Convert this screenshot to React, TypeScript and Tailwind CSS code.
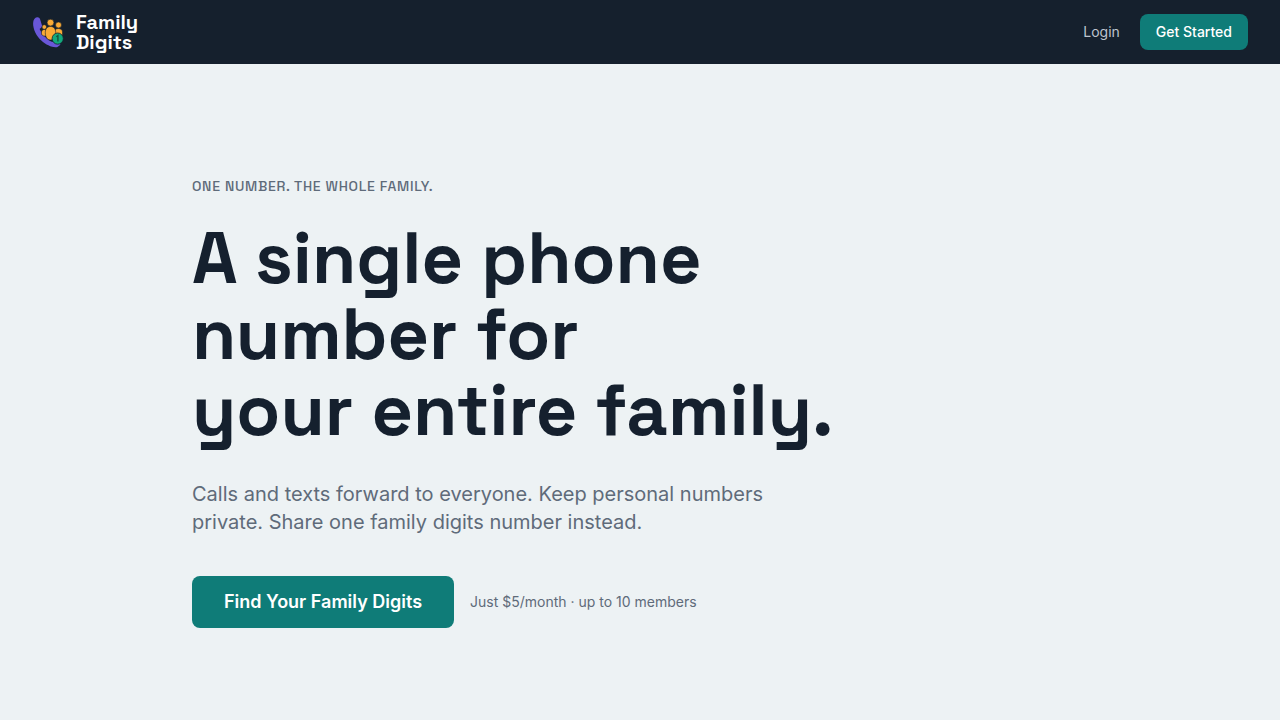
function Logo() {
  return (
    <svg className="h-8 w-8" viewBox="0 0 32 32" fill="none" aria-hidden="true">
      {/* Handset */}
      <path
        d="M5 1.300C3 1.600 1.200 3.700 1.100 7.200c-.1 6 3.300 12.700 8.200 17.400 4.500 4.200 10.700 7 14.700 6.700 1.400-.1 3-1.200 4-2.400.5-.6.3-1.400-.3-1.900l-3.500-2.700c-.7-.5-1.600-.5-2.200.1l-1.600 1.500C16 24.800 10 18.500 7.600 13l1.800-1.500c.6-.5.8-1.300.6-2L8.100 3.200C7.700 1.900 6.600 1.100 5 1.300z"
        fill="#6957d8"
      />
      {/* Family */}
      <g fill="#fbab35" stroke="#15202d" strokeWidth="0.6">
        <circle cx="12.300" cy="11" r="2.300" />
        <path d="M9.500 18.500v-2.300c0-1.700 1.200-2.700 2.800-2.700s2.800 1 2.800 2.700V20h-3.400z" />
        <circle cx="26.500" cy="9" r="3" />
        <path d="M22.300 20v-4c0-2.100 1.700-3.500 4.100-3.500s4.100 1.400 4.100 3.500v3.500z" />
        <circle cx="18.500" cy="6.600" r="3.400" />
        <path d="M13.300 16.500c0-3.800 2-6 5.200-6s5.200 2.200 5.200 6c0 4.800-2 7.500-5.200 7.500s-5.200-2.700-5.200-7.500z" />
      </g>
      {/* Badge */}
      <circle cx="25.700" cy="22.600" r="5.600" fill="#12a97c" stroke="#15202d" strokeWidth="0.8" />
      <path d="M24.300 20.800l1.600-1.200v6" stroke="#15543f" strokeWidth="1.400" />
    </svg>
  );
}

export default function App() {
  return (
    <div className="min-h-screen bg-[#edf2f4] font-['Inter',sans-serif] text-[#15202e]">
      <header className="bg-[#15202d]">
        <nav className="flex h-16 items-center justify-between px-8">
          <a href="#" className="flex items-center gap-3">
            <Logo />
            <span className="font-['Space_Grotesk','Inter',sans-serif] text-xl leading-5 font-bold text-white">
              Family
              <br />
              Digits
            </span>
          </a>
          <div className="flex items-center gap-5">
            <a href="#login" className="text-sm text-[#bdc4cd]">
              Login
            </a>
            <button type="button" className="h-9 rounded-lg bg-[#0f7c78] px-4 text-sm font-medium text-white">
              Get Started
            </button>
          </div>
        </nav>
      </header>

      <main className="px-8 py-28">
        <section className="mx-auto max-w-4xl">
          <p className="font-['Space_Grotesk','Inter',sans-serif] text-sm font-medium tracking-wider text-[#5f6b7a] uppercase">
            One number. The whole family.
          </p>
          <h1 className="mt-6 font-['Space_Grotesk','Inter',sans-serif] text-7xl leading-[76px] font-bold">
            A single phone
            <br />
            number for
            <br />
            your entire family.
          </h1>
          <p className="mt-8 max-w-xl text-xl leading-7 text-[#5f6b7a]">
            Calls and texts forward to everyone. Keep personal numbers private. Share one family digits number instead.
          </p>
          <div className="mt-10 flex items-center gap-4">
            <button type="button" className="rounded-lg bg-[#0f7c78] px-8 py-3 text-lg leading-7 font-semibold text-white">
              Find Your Family Digits
            </button>
            <span className="text-sm text-[#5f6b7a]">Just $5/month · up to 10 members</span>
          </div>
        </section>
      </main>
    </div>
  );
}
